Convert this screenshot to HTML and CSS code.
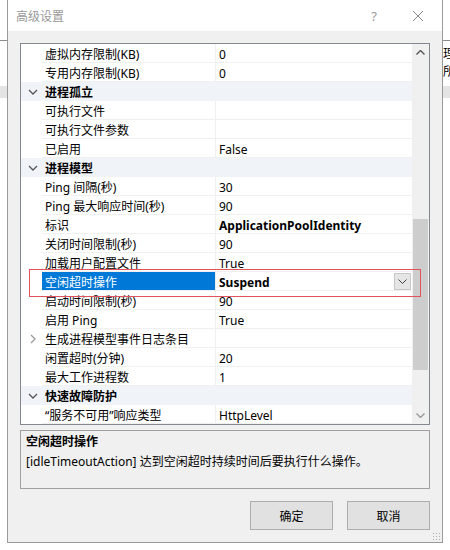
FILE: index.html
```html
<!DOCTYPE html>
<html lang="zh-CN">
<head>
    <meta charset="UTF-8">
    <title>高级设置</title>
    <link rel="stylesheet" href="styles.css">
</head>
<body>
    <div class="behind">理所</div>

    <div class="dialog">
        <div class="titlebar">
            <span class="title">高级设置</span>
            <span class="help">?</span>
            <svg class="close" width="12" height="12" viewBox="0 0 12 12">
                <path d="M1 1 L11 11 M11 1 L1 11" stroke="#888" stroke-width="1" fill="none"/>
            </svg>
        </div>

        <div class="content">
            <div class="grid">
                <div class="rows">
                    <div class="row"><div class="gutter"></div><div class="name">虚拟内存限制(KB)</div><div class="value">0</div></div>
                    <div class="row"><div class="gutter"></div><div class="name">专用内存限制(KB)</div><div class="value">0</div></div>
                    <div class="row cat"><div class="gutter"><svg width="10" height="6" viewBox="0 0 10 6"><path d="M1 1 L5 5 L9 1" stroke="#555" stroke-width="1.3" fill="none"/></svg></div><div class="label">进程孤立</div></div>
                    <div class="row"><div class="gutter"></div><div class="name">可执行文件</div><div class="value"></div></div>
                    <div class="row"><div class="gutter"></div><div class="name">可执行文件参数</div><div class="value"></div></div>
                    <div class="row"><div class="gutter"></div><div class="name">已启用</div><div class="value">False</div></div>
                    <div class="row cat"><div class="gutter"><svg width="10" height="6" viewBox="0 0 10 6"><path d="M1 1 L5 5 L9 1" stroke="#555" stroke-width="1.3" fill="none"/></svg></div><div class="label">进程模型</div></div>
                    <div class="row"><div class="gutter"></div><div class="name">Ping 间隔(秒)</div><div class="value">30</div></div>
                    <div class="row"><div class="gutter"></div><div class="name">Ping 最大响应时间(秒)</div><div class="value">90</div></div>
                    <div class="row"><div class="gutter"></div><div class="name">标识</div><div class="value bold">ApplicationPoolIdentity</div></div>
                    <div class="row"><div class="gutter"></div><div class="name">关闭时间限制(秒)</div><div class="value">90</div></div>
                    <div class="row"><div class="gutter"></div><div class="name">加载用户配置文件</div><div class="value">True</div></div>
                    <div class="row selected"><div class="gutter"></div><div class="name">空闲超时操作</div><div class="value bold">Suspend<span class="drop"><svg width="9" height="5" viewBox="0 0 9 5"><path d="M0.5 0.5 L4.5 4.5 L8.5 0.5" stroke="#444" stroke-width="1" fill="none"/></svg></span></div></div>
                    <div class="row"><div class="gutter"></div><div class="name">启动时间限制(秒)</div><div class="value">90</div></div>
                    <div class="row"><div class="gutter"></div><div class="name">启用 Ping</div><div class="value">True</div></div>
                    <div class="row"><div class="gutter"><svg width="6" height="10" viewBox="0 0 6 10"><path d="M1 1 L5 5 L1 9" stroke="#999" stroke-width="1.3" fill="none"/></svg></div><div class="name">生成进程模型事件日志条目</div><div class="value"></div></div>
                    <div class="row"><div class="gutter"></div><div class="name">闲置超时(分钟)</div><div class="value">20</div></div>
                    <div class="row"><div class="gutter"></div><div class="name">最大工作进程数</div><div class="value">1</div></div>
                    <div class="row cat"><div class="gutter"><svg width="10" height="6" viewBox="0 0 10 6"><path d="M1 1 L5 5 L9 1" stroke="#555" stroke-width="1.3" fill="none"/></svg></div><div class="label">快速故障防护</div></div>
                    <div class="row"><div class="gutter"></div><div class="name">“服务不可用”响应类型</div><div class="value">HttpLevel</div></div>
                </div>
                <div class="scrollbar">
                    <div class="arrow"><svg width="9" height="5" viewBox="0 0 9 5"><path d="M0.5 4.5 L4.5 0.5 L8.5 4.5" stroke="#555" stroke-width="1.4" fill="none"/></svg></div>
                    <div class="track"><div class="thumb"></div></div>
                    <div class="arrow"><svg width="9" height="5" viewBox="0 0 9 5"><path d="M0.5 0.5 L4.5 4.5 L8.5 0.5" stroke="#999" stroke-width="1.4" fill="none"/></svg></div>
                </div>
                <div class="mark"></div>
            </div>

            <div class="desc">
                <div class="desc-title">空闲超时操作</div>
                <div>[idleTimeoutAction] 达到空闲超时持续时间后要执行什么操作。</div>
            </div>

            <div class="buttons">
                <button class="btn">确定</button>
                <button class="btn">取消</button>
            </div>
            <div class="grip"></div>
        </div>
    </div>
</body>
</html>
```

FILE: styles.css
```css
body {
    margin: 0;
    width: 450px;
    height: 550px;
    overflow: hidden;
    position: relative;
    font-family: "Segoe UI", "Noto Sans", "Noto Sans CJK SC", sans-serif;
    font-size: 12px;
    color: #000;
    background:
        linear-gradient(#e4e4e4, #e4e4e4) 0 86px / 100% 12px no-repeat,
        linear-gradient(#8c8c8c, #8c8c8c) 0 40px / 100% 1px no-repeat,
        #fff;
}

.behind {
    position: absolute;
    left: 443px;
    top: 44px;
    font-size: 12px;
    letter-spacing: -2px;
}

.dialog {
    position: absolute;
    left: 7px;
    top: 0;
    width: 434px;
    height: 542px;
    border: 1px solid #9a9a9a;
    border-top: none;
    background: #f0f0f0;
    display: flex;
    flex-direction: column;
}

.titlebar {
    height: 31px;
    background: #fff;
    display: flex;
    align-items: center;
    padding-left: 8px;
    flex-shrink: 0;
}

.title {
    color: #999;
    font-size: 12px;
    flex: 1;
}

.help {
    color: #999;
    font-size: 13px;
    margin-right: 35px;
}

.close {
    margin-right: 18px;
}

.content {
    flex: 1;
    padding: 12px;
    display: flex;
    flex-direction: column;
    position: relative;
}

.grid {
    height: 380px;
    border: 1px solid #828790;
    background: #fff;
    display: flex;
    position: relative;
    flex-shrink: 0;
}

.rows {
    flex: 1;
    overflow: hidden;
}

.row {
    height: 19px;
    display: flex;
}

.gutter {
    width: 21px;
    flex-shrink: 0;
    display: flex;
    align-items: center;
    justify-content: center;
    padding-left: 2px;
    box-sizing: border-box;
}

.name,
.value,
.label {
    height: 19px;
    box-sizing: border-box;
    padding-top: 3px;
    line-height: 16px;
    white-space: nowrap;
}

.name {
    width: 174px;
    flex-shrink: 0;
    padding-left: 3px;
    border-bottom: 1px solid #f0f0f0;
    border-right: 1px solid #f0f0f0;
}

.value {
    flex: 1;
    padding-left: 3px;
    border-bottom: 1px solid #f0f0f0;
    position: relative;
}

.bold {
    font-weight: bold;
}

.cat {
    background: #f0f3f7;
}

.cat .label {
    flex: 1;
    padding-left: 3px;
    font-weight: bold;
}

.selected .name {
    background: #0078d7;
    color: #fff;
}

.drop {
    position: absolute;
    right: 1px;
    top: 1px;
    width: 15px;
    height: 15px;
    background: #e5e5e5;
    border: 1px solid #c8c8c8;
    display: flex;
    align-items: center;
    justify-content: center;
}

.scrollbar {
    width: 17px;
    background: #f0f0f0;
    display: flex;
    flex-direction: column;
}

.arrow {
    height: 17px;
    display: flex;
    align-items: center;
    justify-content: center;
}

.track {
    flex: 1;
    position: relative;
}

.thumb {
    position: absolute;
    left: 1px;
    right: 1px;
    top: 158px;
    height: 151px;
    background: #cdcdcd;
}

.mark {
    position: absolute;
    left: 8px;
    top: 225px;
    width: 390px;
    height: 26px;
    border: 1px solid #e0525c;
}

.desc {
    margin-top: 5px;
    height: 55px;
    border: 1px solid #a0a0a0;
    padding: 1px 5px;
    line-height: 20px;
    flex-shrink: 0;
}

.desc-title {
    font-weight: bold;
}

.buttons {
    margin-top: 12px;
    display: flex;
    justify-content: flex-end;
    gap: 14px;
}

.btn {
    width: 83px;
    height: 29px;
    background: #e1e1e1;
    border: 1px solid #adadad;
    font-family: inherit;
    font-size: 12px;
    color: #000;
    padding: 0;
}

.grip {
    position: absolute;
    right: 2px;
    bottom: 2px;
    width: 8px;
    height: 8px;
    background: radial-gradient(circle, #b0b0b0 0.8px, transparent 1px) 0 0 / 3px 3px;
}
```
